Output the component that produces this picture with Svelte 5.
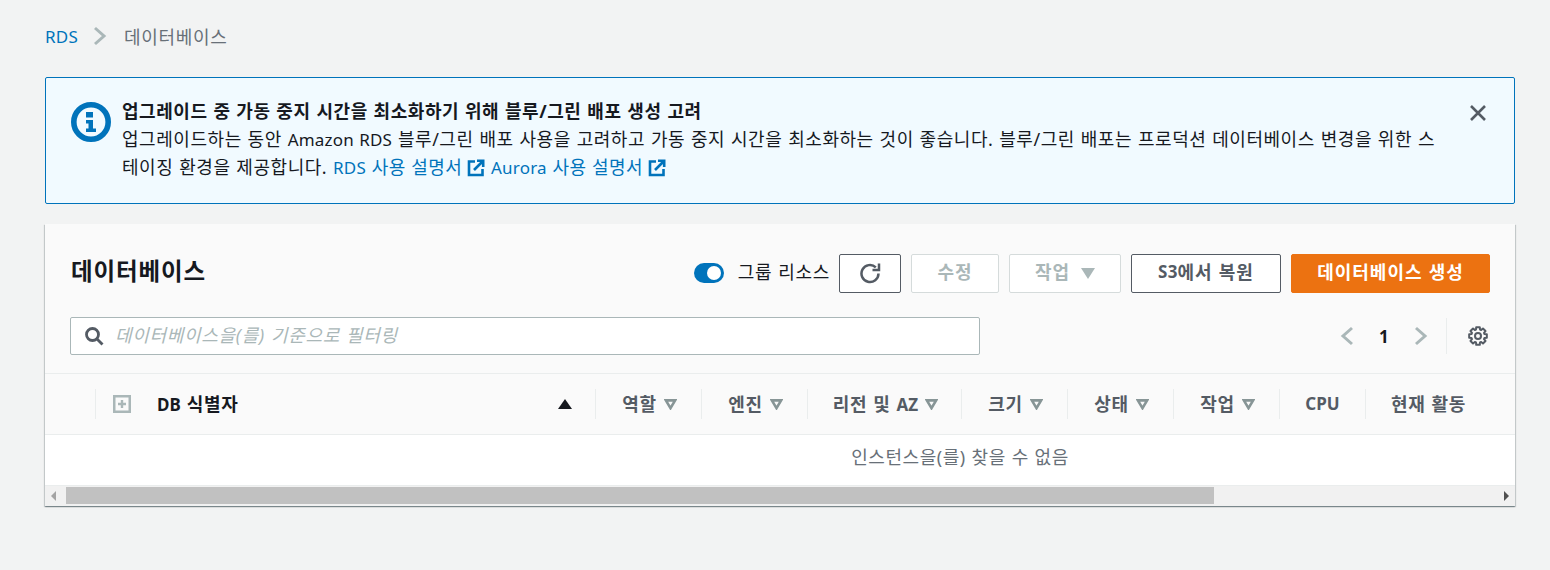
<script lang="ts">
	type Column = { label: string; suffix?: string; width: number; filter: boolean };

	const columns: Column[] = [
		{ label: '역할', width: 106, filter: true },
		{ label: '엔진', width: 106, filter: true },
		{ label: '리전 및 ', suffix: 'AZ', width: 154, filter: true },
		{ label: '크기', width: 106, filter: true },
		{ label: '상태', width: 106, filter: true },
		{ label: '작업', width: 106, filter: true },
		{ label: '', suffix: 'CPU', width: 86, filter: false },
		{ label: '현재 활동', width: 126, filter: false }
	];

	// cog outline: 8 teeth around the centre of a 20x20 box
	const cogPath = (() => {
		const points: string[] = [];
		for (let i = 0; i < 8; i++) {
			const mid = (i * Math.PI) / 4;
			const corners: [number, number][] = [
				[6.8, mid - 0.3],
				[9, mid - 0.2],
				[9, mid + 0.2],
				[6.8, mid + 0.3]
			];
			for (const [r, a] of corners) {
				points.push(`${(10 + r * Math.cos(a)).toFixed(2)} ${(10 + r * Math.sin(a)).toFixed(2)}`);
			}
		}
		return `M${points.join('L')}Z`;
	})();

	let grouped = $state(true);
</script>

<main class="page">
	<nav class="crumbs">
		<a href="#rds" class="lat">RDS</a>
		<svg class="crumb-sep" viewBox="0 0 14 20" width="14" height="20">
			<path d="M2 2l9 8-9 8" fill="none" stroke="#aab7b8" stroke-width="3" />
		</svg>
		<span>데이터베이스</span>
	</nav>

	<section class="alert">
		<svg class="alert-icon" viewBox="0 0 40 40" width="40" height="40">
			<circle cx="20" cy="20" r="17.2" fill="none" stroke="#0073bb" stroke-width="5.600" />
			<rect x="15" y="10" width="7" height="5.500" fill="#0073bb" />
			<path d="M15 18h7v8.500h3V30H15v-3.500h2.500V21.500H15z" fill="#0073bb" />
		</svg>
		<div class="alert-body">
			<h2>업그레이드 중 가동 중지 시간을 최소화하기 위해 블루/그린 배포 생성 고려</h2>
			<p>
				업그레이드하는 동안 <span class="lat">Amazon RDS</span> 블루/그린 배포 사용을 고려하고 가동 중지 시간을 최소화하는 것이 좋습니다. 블루/그린 배포는 프로덕션 데이터베이스 변경을 위한 스테이징 환경을 제공합니다.
				<a href="#rds-docs"><span class="lat">RDS</span> 사용 설명서<svg class="ext" viewBox="0 0 18 18" width="18" height="18">
						<path d="M8 2.500H2v13.500h13.500v-6" fill="none" stroke="#0073bb" stroke-width="2.600" />
						<path d="M7 11l8-8M10 1.800h6.200V8" fill="none" stroke="#0073bb" stroke-width="2.600" />
					</svg></a>
				<a href="#aurora-docs"><span class="lat">Aurora</span> 사용 설명서<svg class="ext" viewBox="0 0 18 18" width="18" height="18">
						<path d="M8 2.500H2v13.500h13.500v-6" fill="none" stroke="#0073bb" stroke-width="2.600" />
						<path d="M7 11l8-8M10 1.800h6.200V8" fill="none" stroke="#0073bb" stroke-width="2.600" />
					</svg></a>
			</p>
		</div>
		<button class="dismiss" type="button" aria-label="닫기">
			<svg viewBox="0 0 18 18" width="18" height="18">
				<path d="M2 2l14 14M16 2L2 16" fill="none" stroke="#545b64" stroke-width="2.600" />
			</svg>
		</button>
	</section>

	<section class="card">
		<header class="card-head">
			<div class="title-row">
				<h1>데이터베이스</h1>
				<div class="actions">
					<button
						class="toggle"
						type="button"
						role="switch"
						aria-checked={grouped}
						aria-label="그룹 리소스"
						onclick={() => (grouped = !grouped)}
					>
						<span class="knob"></span>
					</button>
					<span class="toggle-label">그룹 리소스</span>
					<button class="btn refresh" type="button" aria-label="새로 고침">
						<svg viewBox="0 0 22 22" width="22" height="22">
							<path d="M19.500 11.500a8.500 8.500 0 1 1-2.700-6.200" fill="none" stroke="#545b64" stroke-width="2.500" />
							<path d="M20 1.500v6.500h-6.500" fill="none" stroke="#545b64" stroke-width="2.500" />
						</svg>
					</button>
					<button class="btn disabled edit" type="button" disabled>수정</button>
					<button class="btn disabled work" type="button" disabled>
						작업
						<svg viewBox="0 0 14 12" width="14" height="12"><path d="M0 1h14L7 12z" fill="#aab7b8" /></svg>
					</button>
					<button class="btn restore" type="button"><span class="lat">S3</span>에서 복원</button>
					<button class="btn primary" type="button">데이터베이스 생성</button>
				</div>
			</div>
			<div class="filter-row">
				<label class="search">
					<svg viewBox="0 0 20 20" width="20" height="20">
						<circle cx="8.500" cy="8.500" r="6" fill="none" stroke="#545b64" stroke-width="2.800" />
						<path d="M13 13l5.500 5.500" stroke="#545b64" stroke-width="2.800" />
					</svg>
					<input type="text" placeholder="데이터베이스을(를) 기준으로 필터링" />
				</label>
				<div class="pager">
					<svg viewBox="0 0 14 20" width="14" height="20">
						<path d="M12 2L3 10l9 8" fill="none" stroke="#aab7b8" stroke-width="3" />
					</svg>
					<span class="page-num lat">1</span>
					<svg viewBox="0 0 14 20" width="14" height="20">
						<path d="M2 2l9 8-9 8" fill="none" stroke="#aab7b8" stroke-width="3" />
					</svg>
					<span class="pager-div"></span>
					<svg class="gear" viewBox="0 0 20 20" width="20" height="20">
						<path d={cogPath} fill="none" stroke="#545b64" stroke-width="2" stroke-linejoin="round" />
						<circle cx="10" cy="10" r="3" fill="none" stroke="#545b64" stroke-width="2" />
					</svg>
				</div>
			</div>
		</header>

		<div class="table-head">
			<div class="th th-check">
				<svg viewBox="0 0 18 18" width="18" height="18">
					<rect x="1.250" y="1.250" width="15.500" height="15.500" fill="none" stroke="#aab7b8" stroke-width="2.500" />
					<path d="M9 5v8M5 9h8" stroke="#aab7b8" stroke-width="2.400" />
				</svg>
			</div>
			<div class="th th-id">
				<span><span class="lat">DB</span> 식별자</span>
				<svg viewBox="0 0 14 10" width="14" height="10"><path d="M7 0l7 10H0z" fill="#16191f" /></svg>
			</div>
			{#each columns as column}
				<div class="th" class:filterable={column.filter} style="width: {column.width}px">
					<span>{column.label}{#if column.suffix}<span class="lat">{column.suffix}</span>{/if}</span>
					{#if column.filter}
						<svg viewBox="0 0 14 12" width="13" height="11">
							<path d="M2 1.500h10L7 10z" fill="none" stroke="#879596" stroke-width="2.800" />
						</svg>
					{/if}
				</div>
			{/each}
		</div>

		<div class="empty">인스턴스을(를) 찾을 수 없음</div>

		<div class="scrollbar">
			<span class="arrow left"></span>
			<div class="track"><div class="thumb"></div></div>
			<span class="arrow right"></span>
		</div>
	</section>
</main>

<style>
	:global(body) {
		margin: 0;
		background: #f2f3f3;
	}

	.page {
		box-sizing: border-box;
		height: 570px;
		padding: 24px 35px 0 45px;
		font-family: 'Noto Sans', 'Noto Sans CJK KR', sans-serif;
		font-size: 18px;
		letter-spacing: 0.7px;
		word-spacing: 0.6px;
		color: #16191f;
	}

	/* Latin runs sit smaller than the hangul around them */
	.lat {
		font-size: 17px;
		line-height: 1;
		letter-spacing: 0.2px;
	}

	a {
		color: #0073bb;
		text-decoration: none;
	}

	.crumbs {
		display: flex;
		align-items: center;
		height: 24px;
		color: #687078;
	}

	.crumb-sep {
		margin: 0 17px 0 15px;
	}

	.alert {
		display: flex;
		box-sizing: border-box;
		height: 127px;
		margin-top: 29px;
		padding: 19px 27px 0 25px;
		letter-spacing: 0.55px;
		background: #f1faff;
		border: 1px solid #0073bb;
		border-radius: 2px;
	}

	.alert-icon {
		flex: none;
		margin-top: 5px;
	}

	.alert-body {
		flex: 1;
		margin-left: 11px;
		line-height: 28px;
	}

	.alert-body h2 {
		margin: 0;
		font-size: 18px;
		font-weight: 700;
		line-height: 28px;
	}

	.alert-body p {
		margin: 0;
		word-break: break-all;
	}

	.alert-body a {
		letter-spacing: 0.4px;
	}

	.ext {
		margin-left: 5px;
		vertical-align: -3px;
	}

	.dismiss {
		flex: none;
		align-self: flex-start;
		margin: 7px 0 0 26px;
		padding: 0;
		background: none;
		border: 0;
	}

	.card {
		height: 282px;
		margin-top: 20px;
		background: #fff;
		box-shadow: 0 1px 1px 0 rgba(0, 28, 36, 0.3), 1px 1px 1px 0 rgba(0, 28, 36, 0.15), -1px 1px 1px 0 rgba(0, 28, 36, 0.15);
	}

	.card-head {
		box-sizing: border-box;
		height: 150px;
		padding: 29px 25px 0 25px;
		background: #fafafa;
		border-bottom: 1px solid #eaeded;
	}

	.title-row {
		display: flex;
		align-items: center;
		justify-content: space-between;
		height: 40px;
	}

	.title-row h1 {
		margin: 0 0 6px 1px;
		font-size: 23.5px;
		font-weight: 700;
		letter-spacing: 0.9px;
	}

	.actions {
		display: flex;
		align-items: center;
	}

	.toggle {
		position: relative;
		width: 30px;
		height: 20px;
		padding: 0;
		background: #0073bb;
		border: 0;
		border-radius: 10px;
	}

	.knob {
		position: absolute;
		top: 3px;
		right: 3px;
		width: 14px;
		height: 14px;
		background: #fff;
		border-radius: 50%;
	}

	.toggle-label {
		margin: 0 9px 4px 14px;
	}

	.btn {
		box-sizing: border-box;
		display: flex;
		align-items: center;
		justify-content: center;
		height: 39px;
		padding: 0 0 4px;
		font-family: inherit;
		font-size: 18px;
		font-weight: 700;
		letter-spacing: 0.95px;
		word-spacing: inherit;
		color: #545b64;
		background: #fff;
		border: 1px solid #545b64;
		border-radius: 2px;
	}

	.refresh {
		width: 62px;
		padding: 0;
	}

	.edit {
		width: 88px;
		margin-left: 10px;
	}

	.work {
		gap: 11px;
		width: 112px;
		margin-left: 10px;
	}

	.work svg {
		margin-top: 4px;
	}

	.disabled {
		color: #aab7b8;
		border-color: #d5dbdb;
	}

	.restore {
		width: 150px;
		margin-left: 10px;
	}

	.primary {
		width: 199px;
		margin-left: 10px;
		color: #fff;
		background: #ec7211;
		border-color: #ec7211;
	}

	.filter-row {
		display: flex;
		align-items: center;
		justify-content: space-between;
		margin-top: 24px;
	}

	.search {
		box-sizing: border-box;
		display: flex;
		align-items: center;
		gap: 11px;
		width: 910px;
		height: 38px;
		padding-left: 13px;
		background: #fff;
		border: 1px solid #aab7b8;
		border-radius: 2px;
	}

	.search input {
		flex: 1;
		padding: 0 0 2px;
		font-family: inherit;
		font-size: 18px;
		font-style: italic;
		letter-spacing: inherit;
		word-spacing: inherit;
		background: none;
		border: 0;
		outline: none;
	}

	.search input::placeholder {
		color: #aab7b8;
		opacity: 1;
	}

	.pager {
		display: flex;
		align-items: center;
		height: 38px;
		margin-right: 2px;
	}

	.page-num {
		width: 60px;
		font-weight: 700;
		text-align: center;
	}

	.pager-div {
		width: 1px;
		height: 36px;
		margin: 0 21px 0 18px;
		background: #eaeded;
	}

	.table-head {
		box-sizing: border-box;
		display: flex;
		align-items: center;
		height: 61px;
		padding-left: 50px;
		background: #fafafa;
		border-bottom: 1px solid #eaeded;
	}

	.th {
		box-sizing: border-box;
		display: flex;
		align-items: center;
		justify-content: center;
		gap: 7px;
		height: 30px;
		font-weight: 700;
		color: #545b64;
		border-left: 1px solid #eaeded;
	}

	.filterable {
		padding-left: 2px;
	}

	.th > span {
		margin-bottom: 3px;
	}

	.th .lat {
		font-size: 17px;
		letter-spacing: 0;
	}

	.th-check {
		justify-content: flex-start;
		width: 54px;
		padding-left: 17px;
		border-left: 1px solid #eaeded;
	}

	.th-id {
		justify-content: space-between;
		width: 446px;
		padding: 0 23px 0 8px;
		color: #16191f;
		border-left: 0;
	}

	.empty {
		height: 50px;
		line-height: 44px;
		padding-left: 360px;
		text-align: center;
		letter-spacing: 0.55px;
		color: #687078;
	}

	.scrollbar {
		display: flex;
		align-items: flex-start;
		height: 21px;
		background: #f1f1f1;
		border-top: 1px solid #eaeded;
		box-sizing: border-box;
	}

	.arrow {
		flex: none;
		width: 0;
		height: 0;
		margin-top: 5px;
		border-top: 5px solid transparent;
		border-bottom: 5px solid transparent;
	}

	.arrow.left {
		margin-right: 10px;
		margin-left: 6px;
		border-right: 5px solid #a3a3a3;
	}

	.arrow.right {
		margin-right: 6px;
		margin-left: 6px;
		border-left: 5px solid #505050;
	}

	.track {
		flex: 1;
		height: 17px;
		margin-top: 1px;
	}

	.thumb {
		width: 1148px;
		height: 100%;
		background: #c1c1c1;
	}
</style>
